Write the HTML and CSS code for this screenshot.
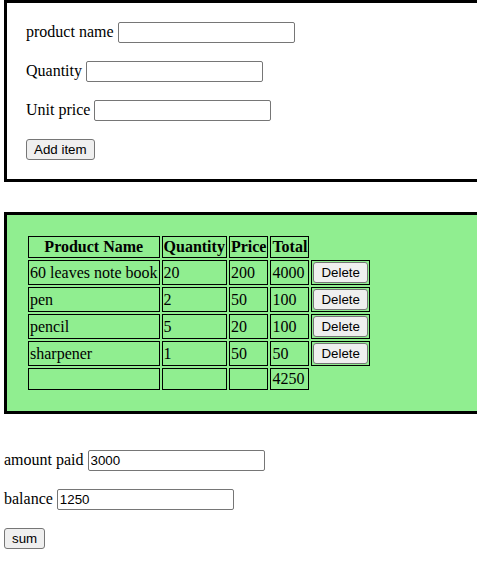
FILE: index.html
```html
<!DOCTYPE html>
<html>
<head>
<meta charset="utf-8">
<link rel="stylesheet" href="styles.css">
</head>
<body>
<div class="page">
<div class="box entry">
  <div class="row">product name <input class="field" type="text"></div>
  <div class="row">Quantity <input class="field" type="text"></div>
  <div class="row">Unit price <input class="field" type="text"></div>
  <div class="row"><button class="btn">Add item</button></div>
</div>

<div class="box list">
  <table class="items">
    <tr><th>Product Name</th><th>Quantity</th><th>Price</th><th>Total</th></tr>
    <tr><td>60 leaves note book</td><td>20</td><td>200</td><td>4000</td><td><button class="btn cellbtn">Delete</button></td></tr>
    <tr><td>pen</td><td>2</td><td>50</td><td>100</td><td><button class="btn cellbtn">Delete</button></td></tr>
    <tr><td>pencil</td><td>5</td><td>20</td><td>100</td><td><button class="btn cellbtn">Delete</button></td></tr>
    <tr><td>sharpener</td><td>1</td><td>50</td><td>50</td><td><button class="btn cellbtn">Delete</button></td></tr>
    <tr><td></td><td></td><td></td><td>4250</td></tr>
  </table>
</div>

<div class="pay">
  <div class="row">amount paid <input class="field" type="text" value="3000"></div>
  <div class="row">balance <input class="field" type="text" value="1250"></div>
  <div class="row"><button class="btn">sum</button></div>
</div>
</div>
</body>
</html>
```

FILE: styles.css
```css
html {
  overflow: hidden;
}
body {
  margin: 0;
  font-family: "Liberation Serif", "Times New Roman", serif;
  font-size: 16px;
  color: #000;
  background: #fff;
}
.page {
  overflow: hidden;
  padding-left: 4px;
  padding-bottom: 20px;
}
.box {
  border: 3px solid #000;
  padding: 19px;
  margin-right: -60px;
}
.entry {
  display: flex;
  flex-direction: column;
  gap: 18px;
}
.row {
  display: flex;
  align-items: baseline;
  gap: 4px;
  white-space: nowrap;
}
.field {
  box-sizing: border-box;
  width: 177px;
  height: 21px;
  margin: 0;
  padding: 1px 2px;
  border: 1px solid #767676;
  border-radius: 2px;
  background: #fff;
  font-family: "Liberation Sans", Arial, sans-serif;
  font-size: 13.333px;
  color: #000;
}
.btn {
  box-sizing: border-box;
  height: 21px;
  margin: 0;
  padding: 0 7px;
  border: 1px solid #767676;
  border-radius: 3px;
  background: #efefef;
  font-family: "Liberation Sans", Arial, sans-serif;
  font-size: 13.333px;
  color: #000;
}
.list {
  margin-top: 30px;
  background: #90ee90;
}
.items {
  border-collapse: separate;
  border-spacing: 2px;
}
.items th,
.items td {
  border: 1px solid #000;
  padding: 1px;
}
.items th {
  font-weight: bold;
  text-align: center;
}
.items td {
  text-align: left;
}
.cellbtn {
  display: block;
}
.pay {
  margin-top: 36px;
  display: flex;
  flex-direction: column;
  gap: 18px;
}
```
